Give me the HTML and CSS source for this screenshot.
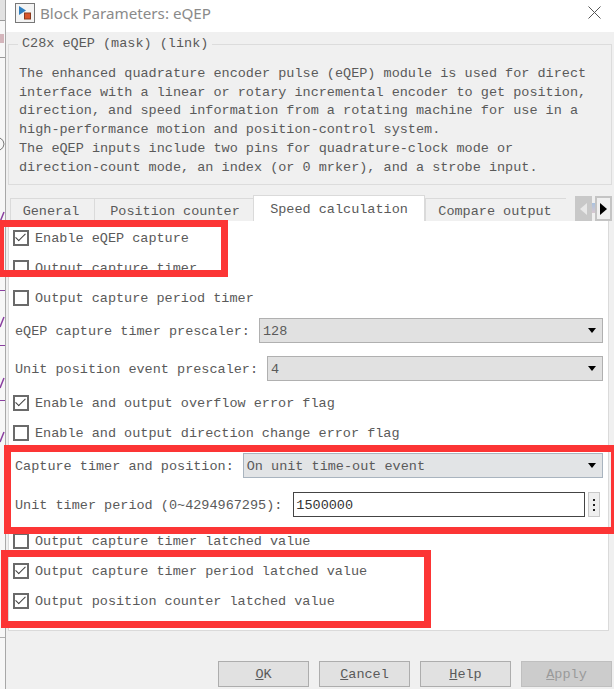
FILE: index.html
```html
<!DOCTYPE html>
<html lang="en">
<head>
    <meta charset="UTF-8">
    <meta name="viewport" content="width=device-width, initial-scale=1.0">
    <title>Block Parameters: eQEP</title>
    <link rel="stylesheet" href="styles.css">
</head>
<body>
    <!-- sliver of the model window behind the dialog -->
    <svg class="behind-strip" width="5" height="689" viewBox="0 0 5 689">
        <rect width="5" height="689" fill="#f7f7f7"/>
        <rect width="5" height="20" fill="#e2e2e2"/>
        <path d="M0 20.500h5M0 57.500h5" stroke="#9a9a9a" fill="none"/>
        <path d="M1 34v9M3 34v9" stroke="#c9a0a8" stroke-width="1.500" fill="none"/>
        <path d="M0 138q4 2 4 6t-4 6" stroke="#777" fill="none"/>
        <path d="M0 222l4-10M0 327l4-10M0 388l4-10M0 442l4-10" stroke="#8a3fa0" stroke-width="1.500" fill="none"/>
        <path d="M0 290.500h5M0 345.500h5M0 400.500h5" stroke="#8a3fa0" fill="none"/>
        <path d="M0 637.500h5" stroke="#b0b0b0" fill="none"/>
    </svg>

    <div class="dialog">
        <div class="title-bar">
            <svg class="app-icon" width="20" height="20" viewBox="0 0 20 20">
                <rect x="0.500" y="0.500" width="19" height="19" fill="#f4f4f4" stroke="#777"/>
                <path d="M4 3v9l7-4.500z" fill="#2f7fc0"/>
                <rect x="9.500" y="10" width="6" height="6" fill="#d9542b" stroke="#8a3a1d"/>
            </svg>
            <span class="title-text">Block Parameters: eQEP</span>
            <svg class="close-icon" width="13" height="13" viewBox="0 0 13 13">
                <path d="M0.500 0.500l12 12M12.500 0.500l-12 12" stroke="#555" fill="none"/>
            </svg>
        </div>

        <div class="dialog-body">
            <fieldset class="mask-group">
                <legend>C28x eQEP (mask) (link)</legend>
                <p>The enhanced quadrature encoder pulse (eQEP) module is used for direct<br>interface with a linear or rotary incremental encoder to get position,<br>direction, and speed information from a rotating machine for use in a<br>high-performance motion and position-control system.<br>The eQEP inputs include two pins for quadrature-clock mode or<br>direction-count mode, an index (or 0 mrker), and a strobe input.</p>
            </fieldset>

            <div class="tab-strip">
                <div class="tab tab-general">General</div>
                <div class="tab tab-position">Position counter</div>
                <div class="tab tab-speed active">Speed calculation</div>
                <div class="tab tab-compare">Compare output</div>
                <div class="tab-scroll">
                    <div class="scroll-btn disabled"><span class="arrow-left"></span></div>
                    <div class="scroll-gap"></div>
                    <div class="scroll-btn"><span class="arrow-right"></span></div>
                </div>
            </div>

            <div class="tab-panel">
                <label class="check-row"><span class="check on"></span>Enable eQEP capture</label>
                <label class="check-row"><span class="check"></span>Output capture timer</label>
                <label class="check-row"><span class="check"></span>Output capture period timer</label>

                <div class="field-row first-field">
                    <span class="field-label">eQEP capture timer prescaler:</span>
                    <div class="combo">128</div>
                </div>
                <div class="field-row second-field">
                    <span class="field-label">Unit position event prescaler:</span>
                    <div class="combo">4</div>
                </div>

                <label class="check-row after-fields"><span class="check on"></span>Enable and output overflow error flag</label>
                <label class="check-row"><span class="check"></span>Enable and output direction change error flag</label>

                <div class="field-row third-field">
                    <span class="field-label">Capture timer and position:</span>
                    <div class="combo combo-blue">On unit time-out event</div>
                </div>
                <div class="field-row fourth-field">
                    <span class="field-label">Unit timer period (0~4294967295):</span>
                    <div class="edit">1500000</div>
                    <div class="dots-btn"><i></i><i></i><i></i></div>
                </div>

                <label class="check-row after-edit"><span class="check"></span>Output capture timer latched value</label>
                <label class="check-row"><span class="check on"></span>Output capture timer period latched value</label>
                <label class="check-row"><span class="check on"></span>Output position counter latched value</label>
            </div>

            <div class="button-row">
                <div class="btn"><u>O</u>K</div>
                <div class="btn"><u>C</u>ancel</div>
                <div class="btn"><u>H</u>elp</div>
                <div class="btn btn-disabled"><u>A</u>pply</div>
            </div>
        </div>
    </div>

    <!-- red annotation boxes drawn over the screenshot -->
    <div class="mark mark-1"></div>
    <div class="mark mark-2"></div>
    <div class="mark mark-3"></div>
</body>
</html>
```

FILE: styles.css
```css
html, body {
    margin: 0;
    padding: 0;
}
body {
    width: 614px;
    height: 689px;
    overflow: hidden;
    position: relative;
    display: flex;
    background-color: #fff;
    font-family: "Liberation Mono", "DejaVu Sans Mono", monospace;
    font-size: 13.5px;
    color: #5a5a5a;
}
.behind-strip {
    flex-shrink: 0;
}
.dialog {
    flex-grow: 1;
    height: 689px;
    border-left: 1px solid #a8a8a8;
    background-color: #f0f0f0;
}
.title-bar {
    height: 32px;
    box-sizing: border-box;
    background-color: #fff;
    display: flex;
    align-items: center;
    padding: 0 13px 7px 9px;
}
.title-text {
    margin-left: 5px;
    font-family: "Noto Sans", "Liberation Sans", sans-serif;
    font-size: 15.200px;
    color: #8a8a8a;
    flex-grow: 1;
}
.dialog-body {
    padding: 4px 0 0 2px;
}
.mask-group {
    margin: 0;
    padding: 0 0 0 10px;
    width: 604px;
    height: 149px;
    box-sizing: border-box;
    border: 1px solid #dcdcdc;
}
.mask-group legend {
    padding: 0 4px;
    margin-left: -1px;
    line-height: 16px;
}
.mask-group p {
    margin: 13px 0 0 0;
    line-height: 18.700px;
}
.tab-strip {
    display: flex;
    height: 26px;
    margin-top: 10px;
    margin-left: 2px;
    align-items: flex-end;
    position: relative;
}
.tab {
    height: 23px;
    box-sizing: border-box;
    border: 1px solid #dadada;
    border-bottom: none;
    border-right: none;
    text-align: center;
    line-height: 25px;
}
.tab-general { width: 84px; padding-right: 3px; }
.tab-position { width: 159px; padding-left: 2px; }
.tab-compare { width: 141px; padding-right: 2px; }
.tab-speed { width: 172px; }
.tab.active {
    height: 26px;
    background-color: #fff;
    line-height: 28px;
    border-right: 1px solid #dadada;
}
.tab-scroll {
    display: flex;
    margin-left: 9px;
    align-self: flex-start;
    margin-top: 1px;
}
.scroll-btn {
    width: 17px;
    height: 25px;
    box-sizing: border-box;
    border: 2px solid #c4c4c4;
    background-color: #f0f0f0;
    display: flex;
    align-items: center;
    justify-content: center;
}
.scroll-btn.disabled {
    background-color: #c8c8c8;
    border-color: #c8c8c8;
}
.scroll-gap {
    width: 3px;
    margin: 7px 0 8px 0;
    background: linear-gradient(#a9c3e0, #d8c7cf);
}
.arrow-left {
    border-style: solid;
    border-width: 6px 7px 6px 0;
    border-color: transparent #e8e8e8 transparent transparent;
}
.arrow-right {
    border-style: solid;
    border-width: 6px 0 6px 7px;
    border-color: transparent transparent transparent #000;
}
.tab-panel {
    width: 601px;
    height: 410px;
    box-sizing: border-box;
    background-color: #fff;
    border: 1px solid #dadada;
    border-top: none;
    padding: 2px 0 0 4px;
}
.check-row {
    display: flex;
    align-items: center;
    height: 30px;
}
.check {
    width: 16px;
    height: 16px;
    box-sizing: border-box;
    border: 2px solid #6a6a6a;
    margin-right: 6px;
    background-color: #fff;
    position: relative;
}
.check.on::after {
    content: "";
    position: absolute;
    left: 3px;
    top: -1px;
    width: 4px;
    height: 9px;
    border: solid #444;
    border-width: 0 1.500px 1.500px 0;
    transform: rotate(45deg);
}
.field-row {
    display: flex;
    align-items: center;
    height: 25px;
    margin-left: -2px;
    padding-left: 4px;
}
.field-label {
    white-space: pre;
    flex-shrink: 0;
    padding-top: 2px;
}
.first-field { margin-top: 5px; }
.second-field { margin-top: 13px; }
.third-field { margin-top: 5px; }
.fourth-field { margin-top: 14px; }
.after-fields { margin-top: 7px; }
.after-edit { margin-top: 9px; }
.combo {
    flex-grow: 1;
    height: 25px;
    box-sizing: border-box;
    margin-left: 9px;
    margin-right: 5px;
    padding-left: 3px;
    line-height: 25px;
    background-color: #e1e1e1;
    border: 1px solid #b0b0b0;
    position: relative;
}
.combo::after {
    content: "";
    position: absolute;
    right: 6px;
    top: 9px;
    border-style: solid;
    border-width: 5px 4px 0 4px;
    border-color: #000 transparent transparent transparent;
}
.combo-blue {
    border-color: #a9b4bf;
    background-color: #e2e4e6;
}
.edit {
    width: 292px;
    height: 25px;
    box-sizing: border-box;
    margin-left: 11px;
    padding-left: 2px;
    line-height: 25px;
    background-color: #fff;
    border: 1px solid #444;
    color: #333;
}
.dots-btn {
    width: 12px;
    height: 25px;
    box-sizing: border-box;
    margin-left: 3px;
    border: 1px solid #c8c8c8;
    background-color: #efefef;
    display: flex;
    flex-direction: column;
    align-items: center;
    justify-content: center;
    gap: 3px;
}
.dots-btn i {
    width: 2px;
    height: 2px;
    background-color: #222;
}
.button-row {
    display: flex;
    gap: 10px;
    margin-top: 30px;
    margin-left: 210px;
}
.btn {
    width: 91px;
    height: 26px;
    box-sizing: border-box;
    border: 1px solid #adadad;
    background-color: #e1e1e1;
    text-align: center;
    line-height: 26px;
}
.btn-disabled {
    background-color: #cccccc;
    border-color: #bfbfbf;
    color: #9a9a9a;
}
.mark {
    position: absolute;
    box-sizing: border-box;
    border: 7px solid #fc3535;
}
.mark-1 {
    left: -3px;
    top: 220px;
    width: 231px;
    height: 57px;
}
.mark-2 {
    left: 4px;
    top: 445px;
    width: 610px;
    height: 89px;
    border-right-width: 3px;
}
.mark-3 {
    left: 1px;
    top: 550px;
    width: 430px;
    height: 78px;
}
```
